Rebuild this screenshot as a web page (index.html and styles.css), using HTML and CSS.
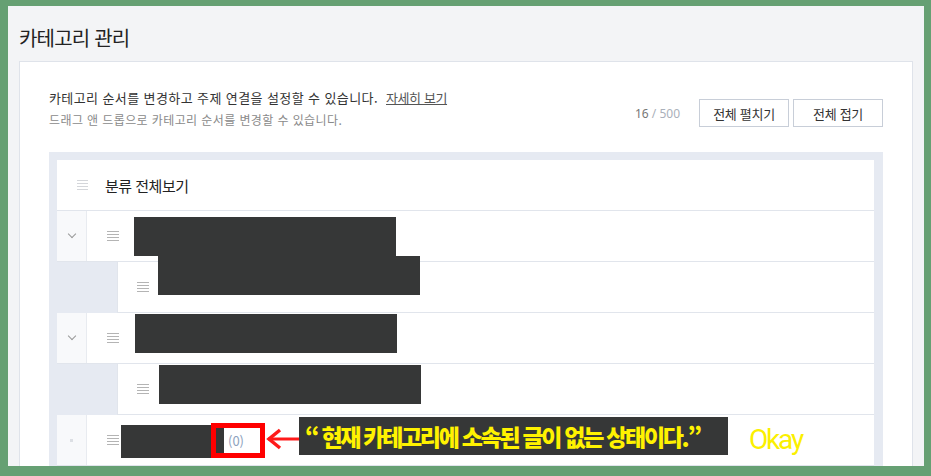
FILE: index.html
```html
<!DOCTYPE html>
<html lang="ko">
<head>
    <meta charset="UTF-8">
    <title>카테고리 관리</title>
    <link rel="stylesheet" href="styles.css">
</head>
<body>

    <div class="frame">
        <h1 class="page-title">카테고리 관리</h1>

        <div class="card">
            <!-- 안내 문구와 전체 버튼 -->
            <div class="card-head">
                <div class="guide">
                    <p class="guide-main">카테고리 순서를 변경하고 주제 연결을 설정할 수 있습니다. <a href="#" class="guide-link">자세히 보기</a></p>
                    <p class="guide-sub">드래그 앤 드롭으로 카테고리 순서를 변경할 수 있습니다.</p>
                </div>
                <div class="tools">
                    <span class="counter"><b>16</b> / 500</span>
                    <button class="btn">전체 펼치기</button>
                    <button class="btn">전체 접기</button>
                </div>
            </div>

            <!-- 카테고리 트리 -->
            <div class="tree">
                <div class="row row-all">
                    <span class="handle handle-light"></span>
                    <span class="all-label">분류 전체보기</span>
                </div>

                <div class="row">
                    <span class="toggle"><span class="chevron"></span></span>
                    <span class="handle"></span>
                    <span class="redact redact-a"></span>
                </div>
                <div class="row row-child">
                    <span class="handle"></span>
                    <span class="redact redact-b"></span>
                </div>

                <div class="row">
                    <span class="toggle"><span class="chevron"></span></span>
                    <span class="handle"></span>
                    <span class="redact redact-c"></span>
                </div>
                <div class="row row-child">
                    <span class="handle"></span>
                    <span class="redact redact-d"></span>
                </div>

                <div class="row row-note">
                    <span class="toggle"><span class="dot"></span></span>
                    <span class="handle"></span>
                    <span class="redact redact-e"></span>
                    <span class="count">(0)</span>

                    <!-- 주석 표시 -->
                    <span class="mark-box"></span>
                    <svg class="mark-arrow" width="34" height="24" viewBox="0 0 34 24">
                        <path d="M3 12 H34" stroke="#ff1a1a" stroke-width="3" fill="none"/>
                        <path d="M15 3 L4 12 L15 21" stroke="#ff1a1a" stroke-width="3.5" fill="none"/>
                    </svg>
                    <span class="mark-label">“ 현재 카테고리에 소속된 글이 없는 상태이다.”</span>
                    <span class="mark-okay">Okay</span>
                </div>
            </div>
        </div>
    </div>

</body>
</html>
```

FILE: styles.css
```css
body {
    margin: 0;
    background-color: #66a073;
    font-family: "Noto Sans CJK KR", "Noto Sans", sans-serif;
    color: #222;
}
.frame {
    margin: 6px 7px 0 8px;
    height: 460px;
    overflow: hidden;
    background-color: #f3f4f6;
    padding: 0 11px;
}
.page-title {
    margin: 0;
    padding-top: 18px;
    font-size: 20px;
    line-height: 28px;
    font-weight: 400;
    letter-spacing: -0.8px;
    color: #222;
}
.card {
    margin-top: 9px;
    background-color: white;
    border: 1px solid #dfe3ea;
    padding: 25px 29px 0 29px;
    height: 500px;
}
.card-head {
    display: flex;
    justify-content: space-between;
    align-items: flex-end;
    margin-bottom: 21px;
}
.guide p {
    margin: 0;
    font-size: 13px;
    line-height: 22px;
    letter-spacing: 0.4px;
}
.guide-main {
    color: #333;
}
.guide p.guide-sub {
    font-size: 12px;
    color: #8a8a8a;
}
.guide-link {
    margin-left: 4px;
    color: #555;
    letter-spacing: -0.4px;
    text-decoration: underline;
}
.tools {
    display: flex;
    align-items: center;
    gap: 4px;
    margin-bottom: 4px;
}
.counter {
    margin-right: 15px;
    font-family: "Noto Sans", sans-serif;
    font-size: 12px;
    color: #aab0ba;
}
.counter b {
    font-weight: 400;
    color: #777;
}
.btn {
    width: 90px;
    height: 28px;
    padding: 0;
    background-color: white;
    border: 1px solid #c8ced8;
    font-family: inherit;
    font-size: 13px;
    letter-spacing: -0.3px;
    color: #333;
}
.tree {
    background-color: #e6eaf2;
    padding: 8px 9px 0 8px;
}
.row {
    display: flex;
    align-items: center;
    height: 50px;
    background-color: white;
    border-bottom: 1px solid #e1e5ec;
}
.row-all {
    padding-left: 20px;
}
.all-label {
    margin-left: 17px;
    font-size: 15px;
    letter-spacing: -0.5px;
    color: #222;
}
.row-child {
    margin-left: 60px;
    border-left: 1px solid #e1e5ec;
    padding-left: 19px;
}
.toggle {
    display: flex;
    align-items: center;
    justify-content: center;
    align-self: stretch;
    width: 29px;
    background-color: #f8f9fb;
    border-right: 1px solid #e8ebf0;
    margin-right: 20px;
}
.chevron {
    width: 5px;
    height: 5px;
    border-right: 1px solid #999;
    border-bottom: 1px solid #999;
    transform: translateY(-2px) rotate(45deg);
}
.dot {
    width: 3px;
    height: 3px;
    background-color: #dcdfe4;
}
.handle {
    width: 12px;
    height: 10px;
    background: repeating-linear-gradient(#b4b4b4 0 1px, transparent 1px 3px);
}
.handle-light {
    width: 11px;
    background: repeating-linear-gradient(#d4d6da 0 1px, transparent 1px 3px);
}

/* 이름 가림 상자 */
.redact {
    align-self: flex-start;
    background-color: #363737;
    height: 39px;
    width: 262px;
}
.redact-a {
    margin: 6px 0 0 15px;
}
.redact-b {
    position: relative;
    top: -6px;
    margin-left: 9px;
}
.redact-c {
    margin: 1px 0 0 16px;
}
.redact-d {
    margin: 1px 0 0 10px;
}
.redact-e {
    margin: 10px 0 0 2px;
    width: 103px;
    height: 33px;
}
.count {
    margin-left: 4px;
    font-size: 13px;
    color: #8ea2be;
}
.row-note {
    position: relative;
}
.mark-box {
    position: absolute;
    left: 154px;
    top: 8px;
    width: 54px;
    height: 35px;
    box-sizing: border-box;
    border: 5px solid #ff0000;
}
.mark-arrow {
    position: absolute;
    left: 208px;
    top: 12px;
}
.mark-label {
    position: absolute;
    left: 242px;
    top: 2px;
    width: 429px;
    height: 38px;
    padding-left: 6px;
    box-sizing: border-box;
    background-color: #363737;
    color: #fff200;
    font-size: 23px;
    font-weight: 900;
    line-height: 38px;
    letter-spacing: -2.3px;
    white-space: nowrap;
}
.mark-okay {
    position: absolute;
    left: 692px;
    top: 9px;
    font-family: Roboto, sans-serif;
    font-size: 28px;
    line-height: 32px;
    letter-spacing: -2.2px;
    color: #fbf000;
}
```
